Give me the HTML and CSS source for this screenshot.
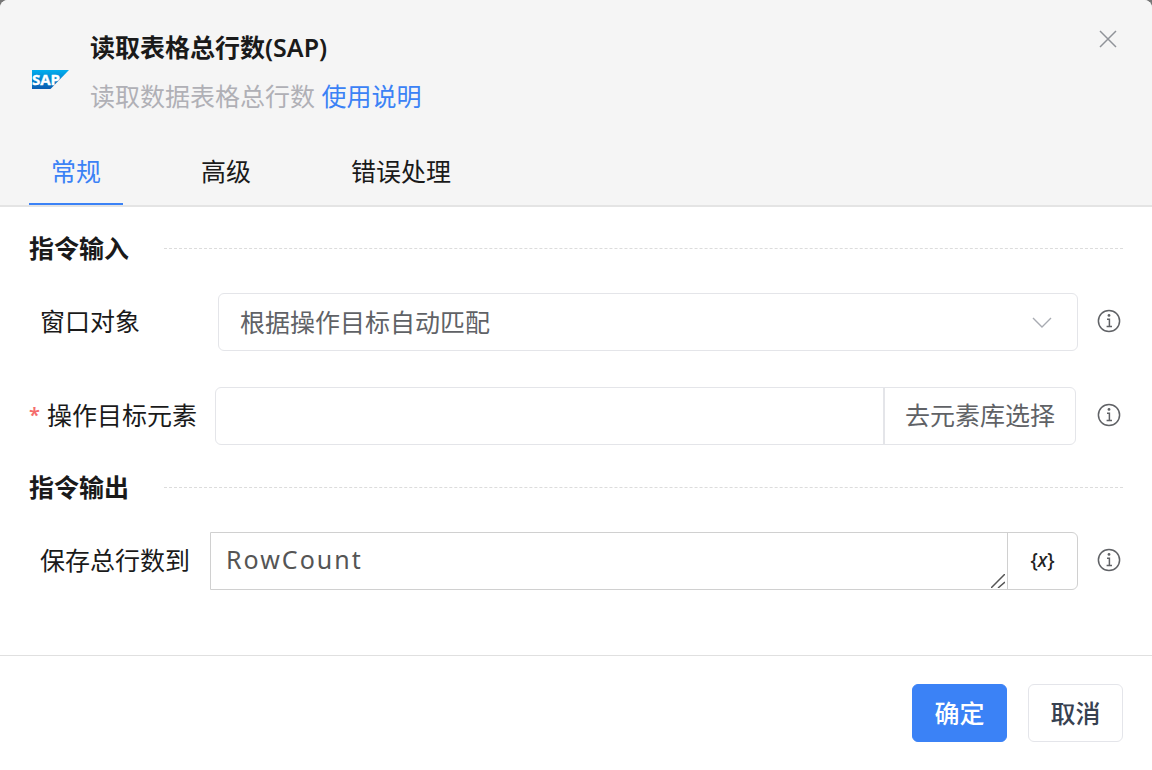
FILE: index.html
```html
<!DOCTYPE html>
<html lang="zh-CN">
<head>
<meta charset="utf-8">
<title>读取表格总行数(SAP)</title>
<link rel="stylesheet" href="styles.css">
</head>
<body>
<svg class="symbols" aria-hidden="true">
  <symbol id="info" viewBox="0 0 24 24">
    <circle cx="12" cy="12" r="10.6" fill="none" stroke="currentColor" stroke-width="1.5"/>
    <circle cx="12" cy="6.4" r="1.4" fill="currentColor"/>
    <path d="M10 10.2H12.4V17.4M9.6 17.6H15" fill="none" stroke="currentColor" stroke-width="1.5"/>
  </symbol>
</svg>
<form class="dialog">
  <header class="header">
    <div class="intro">
      <svg class="logo" viewBox="0 0 38 20" aria-label="SAP">
        <defs><linearGradient id="sap" x1="0" y1="0" x2="0" y2="1"><stop offset="0" stop-color="#00aeef"/><stop offset="1" stop-color="#0a5cb0"/></linearGradient></defs>
        <path d="M0 0H37L18.5 19H0Z" fill="url(#sap)"/>
        <text class="logo-text" x="0" y="15">SAP</text>
      </svg>
      <div class="headings">
        <h1 class="title">读取表格总行数(SAP)</h1>
        <p class="subtitle">读取数据表格总行数 <a class="link" href="#">使用说明</a></p>
      </div>
      <button class="close" type="button" aria-label="关闭">
        <svg class="close-icon" viewBox="0 0 18 18"><path d="M1 1L17 17M17 1L1 17" fill="none" stroke="#909399" stroke-width="1.5"/></svg>
      </button>
    </div>
    <nav class="tabs">
      <button class="tab tab-active" type="button">常规</button>
      <button class="tab" type="button">高级</button>
      <button class="tab" type="button">错误处理</button>
    </nav>
  </header>
  <main class="content">
    <h2 class="section">指令输入</h2>
    <div class="row">
      <label class="label label-window" for="window">窗口对象</label>
      <div class="field select-wrap">
        <select class="select" id="window"><option>根据操作目标自动匹配</option></select>
        <svg class="chevron" viewBox="0 0 20 11"><path d="M1 1L10 10L19 1" fill="none" stroke="#a8abb2" stroke-width="1.4"/></svg>
      </div>
      <svg class="info"><use href="#info"/></svg>
    </div>
    <div class="row">
      <label class="label label-target" for="target"><span class="required">*</span>操作目标元素</label>
      <div class="field group group-target">
        <input class="input" id="target" type="text">
        <button class="pick" type="button">去元素库选择</button>
      </div>
      <svg class="info"><use href="#info"/></svg>
    </div>
    <h2 class="section">指令输出</h2>
    <div class="row">
      <label class="label label-output" for="output">保存总行数到</label>
      <div class="field group group-dark">
        <div class="area-wrap">
          <textarea class="area" id="output" rows="1">RowCount</textarea>
          <svg class="grip" viewBox="0 0 14 14"><path d="M0 14L14 0M7 14L14 8" fill="none" stroke="#555" stroke-width="1.5"/></svg>
        </div>
        <button class="variable" type="button">{<i>x</i>}</button>
      </div>
      <svg class="info"><use href="#info"/></svg>
    </div>
  </main>
  <footer class="footer">
    <button class="button button-primary" type="submit">确定</button>
    <button class="button" type="button">取消</button>
  </footer>
</form>
</body>
</html>
```
FILE: styles.css
```css
* {
  box-sizing: border-box;
}

body {
  margin: 0;
  background: #777;
  color: #1a1a1a;
  font: 25px/36px "Noto Sans", "Noto Sans CJK SC", sans-serif;
}

button,
input,
select,
textarea {
  margin: 0;
  padding: 0;
  border: 0;
  background: none;
  color: inherit;
  font: inherit;
}

.symbols {
  position: absolute;
  width: 0;
  height: 0;
}

.dialog {
  display: flex;
  flex-direction: column;
  min-height: 100vh;
  overflow: hidden;
  border-radius: 8px 8px 0 0;
  background: #fff;
}

.header {
  padding: 29px 29px 0;
  border-bottom: 2px solid #e4e4e4;
  background: #f5f5f5;
}

.intro {
  display: flex;
  align-items: flex-start;
}

.logo {
  width: 38px;
  height: 20px;
  margin: 41px 20px 0 3px;
}

.logo-text {
  fill: #fff;
  stroke: #fff;
  stroke-width: 0.4px;
  font: bold 15px "Open Sans", sans-serif;
}

.headings {
  flex: 1;
}

.title {
  margin: 0 0 13px;
  font-size: 25px;
  font-weight: 600;
}

.subtitle {
  margin: 0;
  color: #b0b0b6;
}

.link {
  color: #3b82f6;
  text-decoration: none;
}

.close {
  display: flex;
  padding: 1px 6px;
}

.close-icon {
  width: 18px;
  height: 18px;
}

.tabs {
  display: flex;
  gap: 56px;
  margin-top: 39px;
}

.tab {
  padding: 0 22px 14px;
  border-bottom: 2px solid transparent;
}

.tab-active {
  border-color: #3b82f6;
  color: #3b82f6;
}

.content {
  flex: 1;
  padding: 23px 29px;
}

.section {
  display: flex;
  align-items: center;
  gap: 35px;
  margin: 0 0 27px;
  font-size: 25px;
  font-weight: 700;
}

.section::after {
  flex: 1;
  border-top: 1px dashed #dcdcdc;
  content: "";
}

.row {
  display: flex;
  align-items: center;
  margin-bottom: 36px;
}

.row + .section {
  margin-top: -12px;
}

.label {
  flex: none;
  padding-bottom: 2px;
}

.label-window {
  width: 189px;
  padding-left: 11px;
}

.label-target {
  display: flex;
  gap: 7px;
  width: 186px;
}

.label-output {
  width: 181px;
  padding-left: 11px;
}

.required {
  color: #f56c6c;
  font-size: 20px;
  font-weight: 600;
}

.field {
  flex: 1;
  min-width: 0;
  height: 58px;
  border: 1px solid #e4e5e9;
  border-radius: 6px;
  color: #606266;
}

.select-wrap {
  position: relative;
}

.select {
  width: 100%;
  height: 100%;
  padding: 0 60px 0 21px;
  appearance: none;
}

.chevron {
  position: absolute;
  top: 23px;
  right: 25px;
  width: 20px;
  height: 11px;
  pointer-events: none;
}

.group {
  display: flex;
}

.group-target {
  margin-right: 2px;
}

.input {
  flex: 1;
  min-width: 0;
  padding: 0 20px;
}

.pick {
  padding: 0 20px 2px;
  border-left: 2px solid #e4e5e9;
}

.group-dark {
  border-color: #d0d0d0;
  border-radius: 0 6px 6px 0;
}

.area-wrap {
  position: relative;
  flex: 1;
}

.area {
  display: block;
  width: 100%;
  height: 56px;
  padding: 8px 15px;
  color: #555;
  letter-spacing: 2px;
  resize: none;
}

.grip {
  position: absolute;
  right: 2px;
  bottom: 1px;
  width: 14px;
  height: 14px;
  pointer-events: none;
}

.variable {
  width: 70px;
  padding-bottom: 2px;
  border-left: 1px solid #d0d0d0;
  color: #222;
  font-size: 19px;
  font-weight: 500;
}

.info {
  flex: none;
  width: 24px;
  height: 24px;
  margin: 0 2px 2px 19px;
  color: #606266;
}

.footer {
  display: flex;
  justify-content: flex-end;
  gap: 21px;
  padding: 28px 29px;
  border-top: 1px solid #e0e0e0;
}

.button {
  width: 95px;
  height: 58px;
  border: 1px solid #e4e5ea;
  border-radius: 6px;
  color: #374151;
  font-weight: 500;
}

.button-primary {
  border-color: #3b82f6;
  background: #3b82f6;
  color: #fff;
}
```
